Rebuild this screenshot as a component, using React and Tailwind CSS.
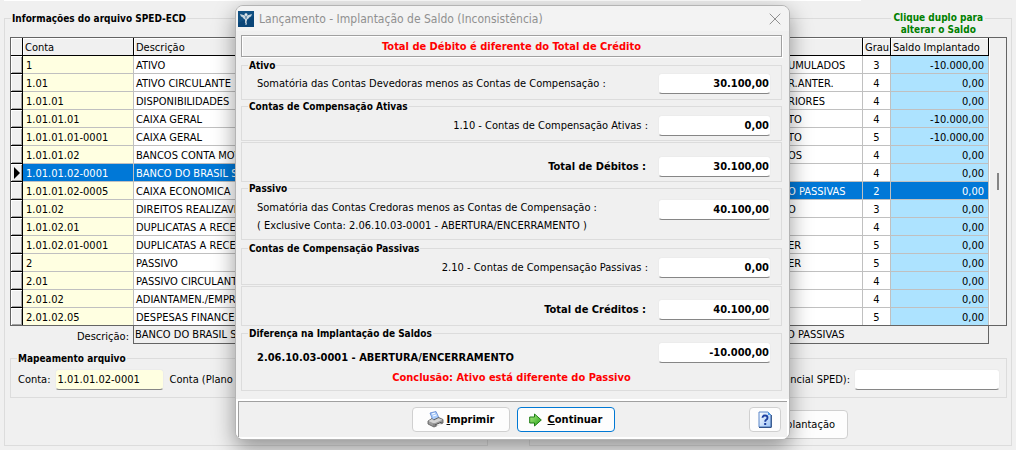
import { X } from "lucide-react";

const accounts = [
  { code: "1", name: "ATIVO" },
  { code: "1.01", name: "ATIVO CIRCULANTE" },
  { code: "1.01.01", name: "DISPONIBILIDADES" },
  { code: "1.01.01.01", name: "CAIXA GERAL" },
  { code: "1.01.01.01-0001", name: "CAIXA GERAL" },
  { code: "1.01.01.02", name: "BANCOS CONTA MOVIMENTO" },
  { code: "1.01.01.02-0001", name: "BANCO DO BRASIL S/A", selected: true },
  { code: "1.01.01.02-0005", name: "CAIXA ECONOMICA" },
  { code: "1.01.02", name: "DIREITOS REALIZAVEIS" },
  { code: "1.01.02.01", name: "DUPLICATAS A RECEBER" },
  { code: "1.01.02.01-0001", name: "DUPLICATAS A RECEBER" },
  { code: "2", name: "PASSIVO" },
  { code: "2.01", name: "PASSIVO CIRCULANTE" },
  { code: "2.01.02", name: "ADIANTAMEN./EMPREST." },
  { code: "2.01.02.05", name: "DESPESAS FINANCEIRAS" },
];

const balances = [
  { name: "UMULADOS", level: 3, value: "-10.000,00" },
  { name: "R.ANTER.", level: 4, value: "0,00" },
  { name: "RIORES", level: 4, value: "0,00" },
  { name: "TO", level: 4, value: "-10.000,00" },
  { name: "TO", level: 5, value: "-10.000,00" },
  { name: "OS", level: 4, value: "0,00" },
  { name: "", level: 4, value: "0,00" },
  { name: "O PASSIVAS", level: 2, value: "0,00", selected: true },
  { name: "O", level: 3, value: "0,00" },
  { name: "", level: 4, value: "0,00" },
  { name: "ER", level: 5, value: "0,00" },
  { name: "ER", level: 5, value: "0,00" },
  { name: "", level: 4, value: "0,00" },
  { name: "", level: 4, value: "0,00" },
  { name: "", level: 5, value: "0,00" },
];

const headCell =
  "h-[18px] border-r border-b border-black bg-[#f0f0f0] pt-px pl-0.5 text-left font-normal shadow-[inset_1px_1px_0_#fff]";
const cell = "border-r border-[#c0c0c0] pt-px";
// the last row has no rule of its own, the frame closes it
const rowHeight = (i, rows) => (i === rows.length - 1 ? "h-[17px]" : "h-[18px] border-b");

const AccountsTable = () => (
  <div className="border border-[#646464] bg-white">
    <table className="w-full table-fixed border-separate border-spacing-0">
      <colgroup>
        <col className="w-3" />
        <col className="w-[111px]" />
        <col />
      </colgroup>
      <thead>
        <tr>
          <th className={headCell} aria-label="Atual"></th>
          <th className={headCell}>Conta</th>
          <th className={headCell}>Descrição</th>
        </tr>
      </thead>
      <tbody>
        {accounts.map((row, i) => {
          const h = rowHeight(i, accounts);
          return (
            <tr key={i} className={row.selected ? "bg-[#0078d7] text-white" : ""}>
              <td
                className={`border-r border-black bg-[#f0f0f0] p-0 shadow-[inset_1px_1px_0_#fff,inset_-1px_-1px_0_#a0a0a0] ${h}`}
              >
                {row.selected && (
                  <svg className="ml-[3px] block" width="6" height="12" viewBox="0 0 6 12">
                    <path d="M0 0L6 6L0 12Z" fill="#000" />
                  </svg>
                )}
              </td>
              <td className={`${cell} pl-[3px] ${row.selected ? "" : "bg-[#ffffe1]"} ${h}`}>
                {row.code}
              </td>
              <td className={`${cell} truncate pl-0.5 ${h}`}>{row.name}</td>
            </tr>
          );
        })}
      </tbody>
    </table>
  </div>
);

const BalancesTable = () => (
  <div className="flex border border-[#646464]">
    <table className="min-w-0 flex-1 table-fixed border-separate border-spacing-0 bg-white">
      <colgroup>
        <col />
        <col className="w-7" />
        <col className="w-[98px]" />
      </colgroup>
      <thead>
        <tr>
          <th className={headCell} aria-label="Descrição"></th>
          <th className={headCell}>Grau</th>
          <th className={headCell}>Saldo Implantado</th>
        </tr>
      </thead>
      <tbody>
        {balances.map((row, i) => {
          const h = rowHeight(i, balances);
          return (
            <tr key={i} className={row.selected ? "bg-[#0078d7] text-white" : ""}>
              <td className={`${cell} ${h}`}>
                <span className="ml-auto block w-[74px] whitespace-nowrap">{row.name}</span>
              </td>
              <td className={`${cell} text-center ${h}`}>{row.level}</td>
              <td className={`${cell} pr-1 text-right ${row.selected ? "" : "bg-[#ade3ff]"} ${h}`}>
                {row.value}
              </td>
            </tr>
          );
        })}
      </tbody>
    </table>
    <div className="flex w-[17px] items-center justify-center border-l border-white">
      <span className="h-[17px] w-0.5 bg-[#858585]"></span>
    </div>
  </div>
);

const Group = ({ title, className = "", inner = "", children }) => (
  <fieldset className={`min-w-0 border border-[#dcdcdc] ${className}`}>
    {title && (
      <legend className="ml-1.5 px-px text-[10px] leading-[13px] font-bold whitespace-nowrap">
        {title}
      </legend>
    )}
    <div className={inner}>{children}</div>
  </fieldset>
);

const field =
  "h-[21px] rounded-sm border border-[#ececec] border-b-[#868686] outline-none";

const Amount = ({ id, value }) => (
  <input
    id={id}
    defaultValue={value}
    className={`${field} w-[113px] shrink-0 bg-white pr-px text-right font-bold`}
  />
);

const Line = ({ id, label, value, right, strong }) => (
  <div className="flex items-center">
    <label
      htmlFor={id}
      className={`flex-1 ${right ? "text-right" : ""} ${strong ? "pr-3 font-bold" : "pr-2.5"}`}
    >
      {label}
    </label>
    <Amount id={id} value={value} />
  </div>
);

const AppIcon = () => (
  <svg width="16" height="16" viewBox="0 0 16 16">
    <rect width="16" height="16" fill="#0b4678" />
    <path d="M0 0H16V5L0 12Z" fill="#175a8c" opacity=".5" />
    <path d="M2 3L7 4.500V8L5 7.200L4.500 6L3 5.500ZM14 3L9 4.500V8L11 7.200L11.500 6L13 5.500Z" fill="#c9d6df" />
    <circle cx="8" cy="3.6" r="1.4" fill="#e4e9ec" />
    <path d="M8 4V14M6 7.5Q10 8.5 8 10Q6.500 11 8.500 12.500M10 7.500Q6 8.500 8 10" stroke="#d5dee4" fill="none" />
  </svg>
);

const PrinterIcon = () => (
  <svg width="17" height="17" viewBox="0 0 17 17">
    <path d="M3 2L9 .5L12 7L6 9.500Z" fill="#a9cbfa" stroke="#5d84cf" strokeWidth=".8" />
    <path d="M5 3L8 2.200M6 5L9.500 4" stroke="#fff" />
    <path d="M1 10L5 7.500L6.500 9L11.500 6.500L16 8.500V12L7 16L1 13Z" fill="#9c9c9c" stroke="#555" strokeWidth=".8" />
    <path d="M1.500 10L5 8L7 9.500L11.500 7.300L15.500 8.800L7 12.500Z" fill="#d4d4d4" />
    <path d="M7 12.500V15.500" stroke="#666" strokeWidth=".8" />
    <path d="M8 13.500L14.500 10.800V12L8.500 14.800Z" fill="#444" />
    <path d="M9 14L13 12.300L15 13.200L11 15Z" fill="#f4f4f4" />
  </svg>
);

const ArrowIcon = () => (
  <svg width="13" height="14" viewBox="0 0 13 14">
    <defs>
      <linearGradient id="arrow" x1="0" y1="0" x2="1" y2="1">
        <stop offset="0" stopColor="#b5f08a" />
        <stop offset="1" stopColor="#1f9e10" />
      </linearGradient>
    </defs>
    <path d="M.7 4H5.500V1L12.300 7L5.500 13V10H.7Z" fill="url(#arrow)" stroke="#1f7d16" />
  </svg>
);

const HelpIcon = () => (
  <svg width="14" height="17" viewBox="0 0 14 17">
    <defs>
      <linearGradient id="sheet" x1="0" y1="0" x2="1" y2="1">
        <stop offset="0" stopColor="#fff" />
        <stop offset="1" stopColor="#9cc4f5" />
      </linearGradient>
    </defs>
    <path d="M1 1H10L13 4V16H1Z" fill="url(#sheet)" stroke="#5a86c8" />
    <path d="M13.300 4V16.400H1" fill="none" stroke="#24467f" />
    <path d="M10 1V4H13Z" fill="#4d9be8" />
    <path d="M4.500 6.800Q4.500 4.500 7 4.500T9.500 6.700Q9.500 8 8.200 8.800Q7.200 9.400 7.200 10.700" fill="none" stroke="#1c3fa0" strokeWidth="1.900" />
    <rect x="6.200" y="12" width="2" height="2" fill="#1c3fa0" />
  </svg>
);

const dialogButton =
  "flex h-[25px] items-center justify-center rounded border bg-[#fdfdfd] font-bold";

const Dialog = () => (
  <div
    role="dialog"
    aria-labelledby="dialog-title"
    className="absolute top-[5px] left-[235px] w-[555px] overflow-hidden rounded-lg border border-[#b4b4b4] bg-[#f0f0f0] shadow-[0_8px_22px_rgba(0,0,0,0.4)]"
  >
    <header className="flex h-[25px] items-center bg-[#f3f3f3] pr-1 pl-0.5 text-[#909090]">
      <AppIcon />
      <h1 id="dialog-title" className="flex-1 pl-[5px] text-xs">
        Lançamento - Implantação de Saldo (Inconsistência)
      </h1>
      <button type="button" aria-label="Fechar">
        <X size={20} strokeWidth={1.2} />
      </button>
    </header>

    <div className="pt-1 pr-[7px] pb-2 pl-[5px]">
      <p className="mb-0.5 h-[22px] border border-[#a0a0a0] text-center leading-[22px] font-bold text-[#ff0000] shadow-[inset_1px_1px_0_#fff,1px_1px_0_#fff]">
        Total de Débito é diferente do Total de Crédito
      </p>

      <Group title="Ativo" inner="pt-px pr-2.5 pb-[5px] pl-[15px]">
        <Line
          id="devedoras"
          label="Somatória das Contas Devedoras menos as Contas de Compensação :"
          value="30.100,00"
        />
      </Group>

      <Group title="Contas de Compensação Ativas" inner="pt-0.5 pr-2.5 pb-1">
        <Line id="ativas" label="1.10 - Contas de Compensação Ativas :" value="0,00" right />
      </Group>

      <Group className="mt-px" inner="pt-[13px] pr-2.5 pb-1">
        <Line id="debitos" label="Total de Débitos :" value="30.100,00" right strong />
      </Group>

      <Group title="Passivo" inner="flex items-start pt-1 pr-2.5 pb-1 pl-[15px]">
        <label htmlFor="credoras" className="flex-1 leading-[18px]">
          Somatória das Contas Credoras menos as Contas de Compensação :
          <br />( Exclusive Conta: 2.06.10.03-0001 - ABERTURA/ENCERRAMENTO )
        </label>
        <Amount id="credoras" value="40.100,00" />
      </Group>

      <Group
        title="Contas de Compensação Passivas"
        className="mt-0.5"
        inner="pt-0.5 pr-2.5 pb-1.5"
      >
        <Line id="passivas" label="2.10 - Contas de Compensação Passivas :" value="0,00" right />
      </Group>

      <Group className="mt-px" inner="pt-3 pr-2.5 pb-[5px]">
        <Line id="creditos" label="Total de Créditos :" value="40.100,00" right strong />
      </Group>

      <Group title="Diferença na Implantação de Saldos" className="mt-px" inner="pt-0.5 pb-1">
        <div className="flex items-start pr-2.5 pl-[15px]">
          <label htmlFor="diferenca" className="flex-1 pt-2 leading-4 font-bold">
            2.06.10.03-0001 - ABERTURA/ENCERRAMENTO
          </label>
          <Amount id="diferenca" value="-10.000,00" />
        </div>
        <p className="pt-1 text-center leading-4 font-bold text-[#ff0000]">
          Conclusão: Ativo está diferente do Passivo
        </p>
      </Group>
    </div>

    <footer className="border-2 border-white">
      <div className="grid grid-cols-[1fr_auto_1fr] items-center border border-r-0 border-b-0 border-[#a0a0a0] py-[5px] pr-1.5 pl-1.5">
        <div className="col-start-2 flex gap-[7px]">
          <button type="button" className={`${dialogButton} w-[98px] gap-[3px] border-[#d0d0d0]`}>
            <PrinterIcon />
            <span>
              <u>I</u>mprimir
            </span>
          </button>
          <button type="button" className={`${dialogButton} w-[98px] gap-1.5 border-[#0078d4]`}>
            <ArrowIcon />
            <span>
              <u>C</u>ontinuar
            </span>
          </button>
        </div>
        <button
          type="button"
          aria-label="Ajuda"
          className={`${dialogButton} w-8 justify-self-end border-[#d0d0d0]`}
        >
          <HelpIcon />
        </button>
      </div>
    </footer>
  </div>
);

const App = () => {
  return (
    <div className="relative min-h-screen overflow-hidden bg-[#f0f0f0] font-['DejaVu_Sans_Condensed','DejaVu_Sans',sans-serif] text-[11px] leading-[13px] text-black">
      <div className="mr-[155px] ml-1 h-px bg-white"></div>

      <main className="flex gap-[41px] px-1 pt-[11px]">
        <Group
          title="Informações do arquivo SPED-ECD"
          className="flex-1"
          inner="pt-3 pr-1 pb-1.5 pl-[5px]"
        >
          <AccountsTable />
          <div className="flex h-[18px] items-stretch">
            <span className="w-[123px] pt-1 pr-1 text-right">Descrição:</span>
            <span className="flex-1 border-b border-l border-[#646464] pt-0.5 pl-px">
              BANCO DO BRASIL S/A
            </span>
          </div>
          <Group title="Mapeamento arquivo" className="mt-2" inner="pt-1 pb-[7px] pl-[7px]">
            <div className="flex items-center">
              <label htmlFor="conta">Conta:</label>
              <input
                id="conta"
                defaultValue="1.01.01.02-0001"
                className={`${field} mr-1.5 ml-1 w-[109px] bg-[#ffffe1] px-0.5`}
              />
              <span>Conta (Plano Referencial):</span>
            </div>
          </Group>
        </Group>

        <fieldset className="min-w-0 flex-1 border border-[#dcdcdc]">
          <legend className="mr-[26px] ml-auto h-[13px] px-0.5 text-center text-[10px] leading-3 font-bold text-[#008000]">
            Clique duplo para
            <br />
            alterar o Saldo
          </legend>
          <div className="pt-3 pr-1 pb-1.5 pl-[5px]">
            <BalancesTable />
            <div className="mr-[18px] h-[18px] border-r border-b border-[#646464] pt-0.5 pr-[127px]">
              <span className="ml-auto block w-[74px] whitespace-nowrap">O PASSIVAS</span>
            </div>
            <fieldset className="mt-3.5 border border-[#dcdcdc] pt-2.5 pr-1.5 pb-[7px]">
              <div className="flex items-center justify-end gap-1">
                <label htmlFor="referencial">Conta (Plano Referencial SPED):</label>
                <input id="referencial" className={`${field} w-[146px] bg-white px-0.5`} />
              </div>
            </fieldset>
            <div className="mt-3 flex justify-end pr-[159px]">
              <button
                type="button"
                className="h-[29px] rounded border border-[#d0d0d0] bg-[#fdfdfd] px-3"
              >
                Gravar Implantação
              </button>
            </div>
          </div>
        </fieldset>
      </main>

      <Dialog />
    </div>
  );
};

export default App;
